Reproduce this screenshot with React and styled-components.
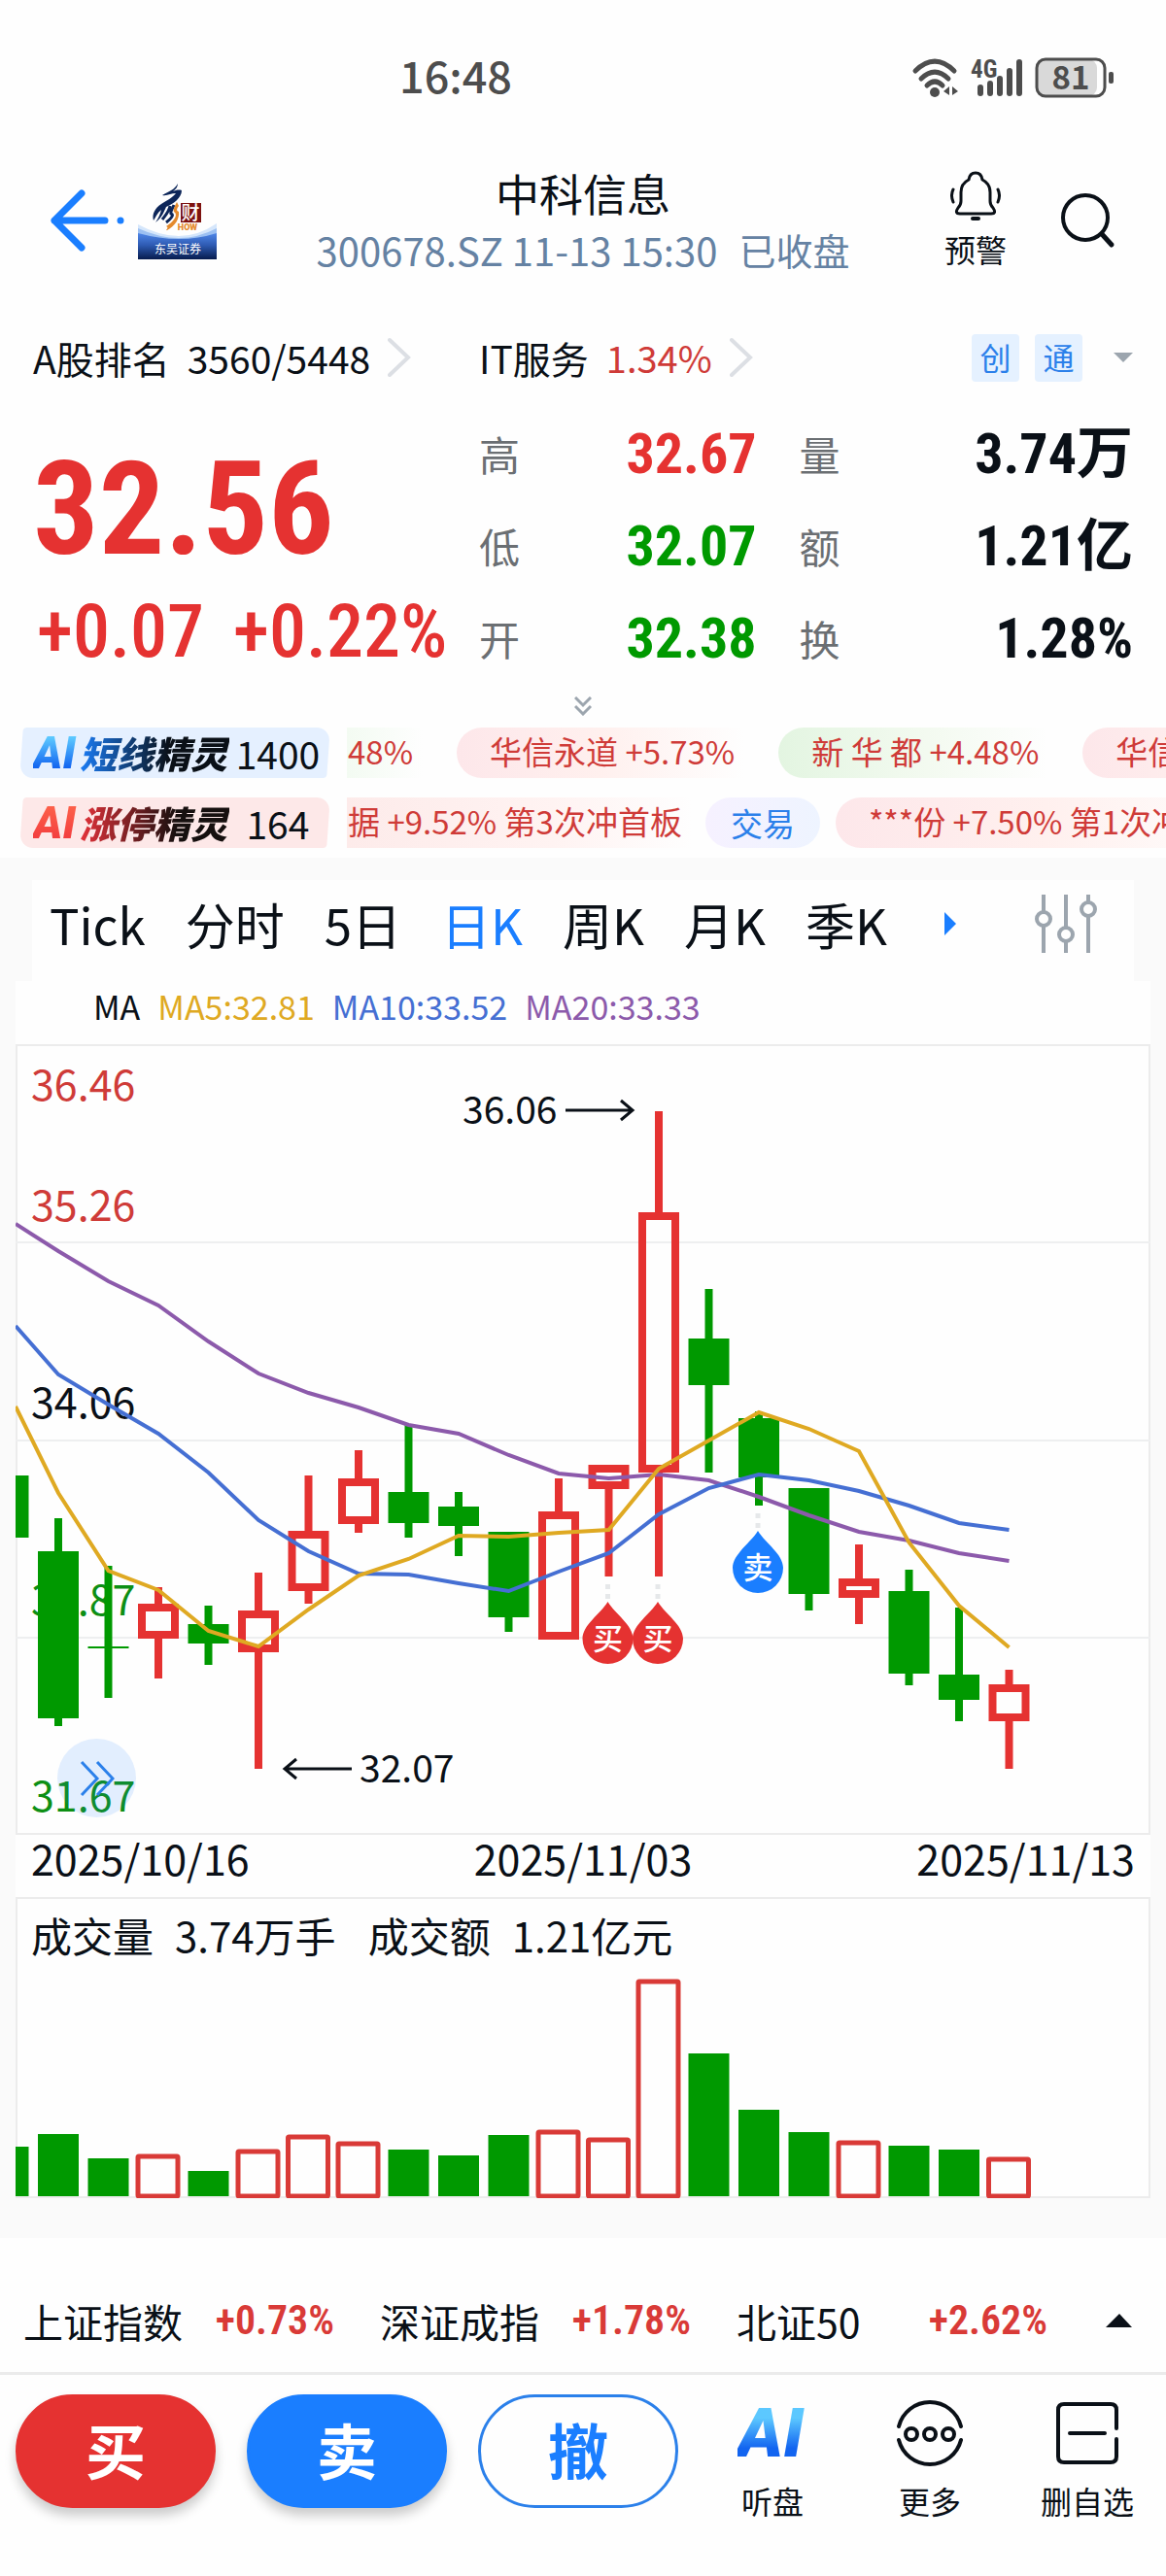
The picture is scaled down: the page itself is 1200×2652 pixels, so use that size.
import { useState } from "react";
import styled, { createGlobalStyle, css } from "styled-components";

const RED = "#e53231";
const GREEN = "#009900";
const BLUE = "#1a7eff";
const INK = "#0a1017";

const GlobalStyle = createGlobalStyle`
* {
  box-sizing: border-box;
}
body {
  margin: 0;
  background: #fefefe;
  color: ${INK};
  font-family: "Noto Sans CJK SC", "Noto Sans", sans-serif;
}
button {
  border: 0;
  padding: 0;
  background: none;
  color: inherit;
  font: inherit;
  cursor: pointer;
}
svg {
  display: block;
  flex: none;
}
`;

const narrow = css`
font-family: "Roboto Condensed", "Liberation Sans Narrow", "Noto Sans CJK SC", sans-serif;
`;

const Page = styled.main`
width: 100%;
overflow: hidden;
`;

/* status bar */

const StatusBar = styled.div`
display: flex;
justify-content: space-between;
align-items: center;
height: 154px;
padding: 0 54px 0 34%;
color: #4d4d4d;
`;

const Clock = styled.time`
font-size: 45px;
font-weight: 500;
line-height: 48px;
padding-left: 3px;
`;

const StatusIcons = styled.div`
display: flex;
align-items: center;
gap: 12px;
padding-top: 6px;
svg {
  overflow: visible;
}
`;

/* header */

const Header = styled.header`
display: grid;
grid-template-columns: 1fr auto 1fr;
align-items: center;
padding: 15px 52px 0 52px;
`;

const HeaderLeft = styled.div`
display: flex;
align-items: center;
gap: 14px;
`;

const HeaderRight = styled.div`
display: flex;
align-items: center;
justify-content: flex-end;
gap: 56px;
`;

const TitleBlock = styled.div`
text-align: center;
`;

const Title = styled.h1`
margin: 0;
font-size: 45px;
font-weight: 400;
line-height: 60px;
`;

const SubTitle = styled.p`
display: flex;
gap: 22px;
margin: 0;
color: #6582a3;
font-size: 40px;
line-height: 56px;
white-space: nowrap;
`;

const MarketState = styled.span`
font-size: 38px;
`;

const IconButton = styled.button`
display: flex;
flex-direction: column;
align-items: center;
gap: 6px;
font-size: 32px;
line-height: 44px;
white-space: nowrap;
`;

/* rank and quote */

const RankRow = styled.div`
display: grid;
grid-template-columns: 459fr 673fr;
align-items: center;
height: 60px;
margin-top: 53px;
padding: 0 34px;
font-size: 39px;
line-height: 58px;
`;

const RankLink = styled.a`
display: flex;
align-items: center;
gap: 18px;
color: inherit;
text-decoration: none;
white-space: nowrap;
`;

const RankRight = styled.div`
display: flex;
align-items: center;
justify-content: space-between;
`;

const Up = styled.span`
color: #cf3b38;
font-size: 38px;
`;

const Tags = styled.div`
display: flex;
align-items: center;
gap: 16px;
`;

const Tag = styled.span`
width: 49px;
height: 49px;
border-radius: 4px;
background: #e5f1ff;
color: #2b80ea;
font-size: 32px;
line-height: 46px;
text-align: center;
`;

const TagArrow = styled.button`
margin-left: 16px;
`;

const Quote = styled.section`
display: grid;
grid-template-columns: 459fr 673fr;
height: 285px;
margin-top: 21px;
padding: 0 34px;
`;

const PriceBlock = styled.div`
${narrow}
color: ${RED};
font-weight: 700;
white-space: nowrap;
`;

const Price = styled.div`
margin-top: 36px;
font-size: 134px;
line-height: 140px;
`;

const Change = styled.div`
display: flex;
gap: 30px;
margin-top: 10px;
padding-left: 4px;
font-size: 76px;
line-height: 90px;
font-weight: 500;
`;

const Stats = styled.dl`
display: grid;
grid-template-columns: 286fr 344fr;
grid-auto-rows: 95px;
column-gap: 44px;
margin: 0;
`;

const Stat = styled.div`
display: flex;
align-items: center;
justify-content: space-between;
white-space: nowrap;
`;

const StatLabel = styled.dt`
color: #6b6f73;
font-size: 42px;
line-height: 60px;
`;

const StatValue = styled.dd`
${narrow}
margin: 0;
color: ${(props) => props.$color || INK};
font-size: 58px;
font-weight: 700;
line-height: 60px;
`;

const ExpandButton = styled.button`
display: flex;
align-items: center;
justify-content: center;
width: 100%;
height: 45px;
`;

/* AI tickers */

const Tickers = styled.section`
display: flex;
flex-direction: column;
gap: 20px;
padding: 0 0 10px 20px;
`;

const TickerRow = styled.div`
display: flex;
gap: 17px;
height: 52px;
`;

const TickerName = styled.button`
display: flex;
flex: none;
align-items: center;
width: 320px;
padding-left: 14px;
position: relative;
z-index: 0;
&::before {
  content: "";
  position: absolute;
  inset: 0 2px;
  z-index: -1;
  border-radius: 4px 14px 4px 14px;
  background: ${(props) => (props.$hot ? "#fde8e8" : "#e5f0ff")};
  transform: skewX(-4deg);
}
`;

const AiMark = styled.span`
flex: none;
padding-right: 4px;
font-family: Roboto, "Liberation Sans", sans-serif;
font-size: ${(props) => props.$size}px;
font-style: italic;
font-weight: 900;
line-height: 52px;
background: ${(props) => (props.$hot ? "linear-gradient(#ff6a4d, #f0343c)" : "linear-gradient(#5cc8ff 20%, #1264f0 80%)")};
background-clip: text;
-webkit-background-clip: text;
color: transparent;
`;

const AiName = styled.span`
flex: none;
padding-right: 2px;
font-size: 38px;
font-style: italic;
font-weight: 900;
line-height: 50px;
background: ${(props) => (props.$hot ? "linear-gradient(to right, #e5323a, #16100f 65%)" : "linear-gradient(to right, #1a7cf5, #0a1017 60%)")};
background-clip: text;
-webkit-background-clip: text;
color: transparent;
`;

const AiCount = styled.span`
flex: 1;
padding-right: 4px;
font-size: 39px;
line-height: 50px;
text-align: center;
`;

const TickerTrack = styled.div`
display: flex;
flex: 1;
min-width: 0;
overflow: hidden;
color: #cf3b38;
font-size: 33px;
line-height: 48px;
white-space: nowrap;
`;

const tints = {
  red: "#fde7ea, #fff0ee 50%, #fefefe",
  redTail: "#fdebea, #fff3f2 60%, #fefefe",
  green: "#e3f5e1, #f3faf0 55%, #fefefe",
  greenTail: "#f3fbf2, #fefefe",
};

const TickerPill = styled.span`
flex: none;
height: 52px;
margin-right: ${(props) => (props.$long ? "14px" : "35px")};
padding: 0 10px 0 ${(props) => (props.$cut ? "1px" : "34px")};
border-radius: ${(props) => (props.$cut ? "0" : "26px 0 0 26px")};
background: linear-gradient(to right, ${(props) => tints[props.$tint]});
`;

const TradeButton = styled.button`
flex: none;
width: 118px;
height: 52px;
margin-right: 16px;
border-radius: 26px;
background: linear-gradient(to right, #f6f1ff, #eef4ff);
color: #2b80ea;
`;

/* chart */

const ChartSection = styled.section`
padding: 23px 16px 41px;
background: #fafafa;
`;

const Tabs = styled.nav`
display: flex;
align-items: center;
justify-content: space-between;
height: 104px;
margin: 0 17px;
padding: 0 38px 14px 18px;
background: #fefefe;
`;

const TabList = styled.div`
display: flex;
align-items: center;
gap: 41px;
`;

const Tab = styled.button`
color: ${(props) => (props.$active ? BLUE : INK)};
font-size: 51px;
line-height: 72px;
white-space: nowrap;
`;

const MoreTabs = styled.button`
padding-left: 18px;
`;

const Panel = styled.div`
background: #fefefe;
`;

const MaRow = styled.div`
display: flex;
gap: 18px;
height: 65px;
padding-left: 80px;
font-size: 34px;
line-height: 52px;
`;

const Ma = styled.span`
color: ${(props) => props.$color};
`;

const ChartBox = styled.div`
position: relative;
svg {
  width: 100%;
  height: auto;
}
`;

const BackButton = styled.button`
position: absolute;
left: 43px;
bottom: 18px;
display: flex;
align-items: center;
justify-content: center;
width: 81px;
height: 81px;
border-radius: 50%;
background: rgba(26, 126, 255, 0.12);
&& svg {
  width: 36px;
  height: 38px;
}
`;

const Dates = styled.div`
display: flex;
justify-content: space-between;
height: 64px;
padding: 0 16px;
font-size: 43px;
line-height: 46px;
`;

const VolumeTitle = styled.dl`
display: flex;
gap: 33px;
height: 78px;
margin: 0;
padding: 0 14px;
border: 2px solid #ececec;
border-bottom: 0;
font-size: 42px;
line-height: 74px;
`;

const VolumeItem = styled.div`
display: flex;
gap: 22px;
dd {
  margin: 0;
}
`;

/* bottom */

const IndexBar = styled.section`
display: flex;
align-items: center;
height: 138px;
padding: 32px 35px 0 24px;
font-size: 41px;
line-height: 60px;
`;

const IndexList = styled.div`
display: grid;
flex: 1;
grid-template-columns: repeat(3, 1fr);
column-gap: 47px;
margin-right: 60px;
`;

const IndexItem = styled.a`
display: flex;
justify-content: space-between;
color: inherit;
text-decoration: none;
white-space: nowrap;
`;

const IndexChange = styled.span`
${narrow}
color: #d93a37;
font-size: 42px;
font-weight: 600;
`;

const ActionBar = styled.footer`
display: grid;
grid-template-columns: repeat(3, 206fr) 130fr 130fr 130fr;
column-gap: 32px;
align-items: start;
height: 209px;
padding: 20px 16px 0;
border-top: 3px solid #ebebeb;
`;

const TradeAction = styled.button`
height: 117px;
border: 3px solid ${(props) => props.$line};
border-radius: 59px;
background: ${(props) => props.$fill};
box-shadow: ${(props) => (props.$shadow ? "0 8px 12px rgba(0, 0, 0, 0.2)" : "none")};
color: ${(props) => props.$text};
font-size: 62px;
font-weight: 700;
line-height: 104px;
padding-bottom: 5px;
`;

const Tool = styled.button`
display: grid;
grid-template-rows: 80px 44px;
justify-items: center;
align-items: center;
row-gap: 7px;
font-size: 32px;
line-height: 44px;
white-space: nowrap;
`;

const X0 = 44;
const STEP = 51.5;
const centre = (i) => X0 + STEP * i;

// high, body top, body bottom, low in chart units; u marks a rising day
const candles = [
  { i: -1, h: 444, t: 444, b: 508, l: 508, v: 179 },
  { i: 0, h: 488, t: 522, b: 694, l: 702, v: 166 },
  { i: 1, h: 537, t: 620, b: 622, l: 673, v: 191 },
  { i: 2, h: 559, t: 576, b: 612, l: 653, v: 187, u: true },
  { i: 3, h: 578, t: 597, b: 617, l: 639, v: 204 },
  { i: 4, h: 544, t: 583, b: 626, l: 746, v: 182, u: true },
  { i: 5, h: 444, t: 501, b: 563, l: 576, v: 167, u: true },
  { i: 6, h: 418, t: 447, b: 494, l: 503, v: 174, u: true },
  { i: 7, h: 392, t: 461, b: 493, l: 508, v: 182 },
  { i: 8, h: 461, t: 476, b: 496, l: 527, v: 188 },
  { i: 9, h: 502, t: 502, b: 590, l: 605, v: 167 },
  { i: 10, h: 447, t: 481, b: 613, l: 613, v: 162, u: true },
  { i: 11, h: 433, t: 433, b: 458, l: 548, v: 170, u: true },
  { i: 12, h: 69, t: 173, b: 441, l: 548, v: 7, u: true },
  { i: 13, h: 252, t: 303, b: 351, l: 441, v: 83 },
  { i: 14, h: 378, t: 385, b: 446, l: 475, v: 141 },
  { i: 15, h: 457, t: 457, b: 566, l: 583, v: 164 },
  { i: 16, h: 515, t: 550, b: 570, l: 597, v: 173, u: true },
  { i: 17, h: 541, t: 563, b: 648, l: 660, v: 178 },
  { i: 18, h: 580, t: 649, b: 675, l: 697, v: 182 },
  { i: 19, h: 644, t: 659, b: 697, l: 746, v: 190, u: true },
];

const averages = [
  {
    name: "MA20",
    value: "33.33",
    color: "#8c5aab",
    start: 185,
    points: [213, 244, 269, 306, 339, 359, 374, 392, 401, 423, 442, 447, 443, 449, 466, 485, 502, 511, 524, 532],
  },
  {
    name: "MA10",
    value: "33.52",
    color: "#456fd3",
    start: 290,
    points: [340, 371, 401, 441, 490, 522, 545, 546, 555, 563, 543, 524, 484, 457, 443, 449, 460, 475, 493, 500],
  },
  {
    name: "MA5",
    value: "32.81",
    color: "#dfa922",
    start: 373,
    points: [462, 542, 562, 604, 620, 582, 547, 530, 506, 507, 503, 500, 437, 408, 379, 396, 419, 513, 578, 621],
  },
];

const priceLabels = [
  { text: "36.46", y: 58, color: "#cf3b38" },
  { text: "35.26", y: 182, color: "#cf3b38" },
  { text: "34.06", y: 385, color: INK },
  { text: "32.87", y: 588, color: "#0d8f14" },
  { text: "31.67", y: 790, color: "#0d8f14" },
];

const trades = [
  { i: 11, tip: 574, text: "买", color: RED },
  { i: 12, tip: 574, text: "买", color: RED },
  { i: 14, tip: 501, text: "卖", color: BLUE },
];

const indexes = [
  { name: "上证指数", change: "+0.73%" },
  { name: "深证成指", change: "+1.78%" },
  { name: "北证50", change: "+2.62%" },
];

const periods = ["Tick", "分时", "5日", "日K", "周K", "月K", "季K"];

function Candle({ h, t, b, l, i, u }) {
  const x = centre(i);
  if (u) {
    return (
      <g>
        <path d={`M${x} ${h}V${t + 1}M${x} ${b - 1}V${l}`} stroke={RED} strokeWidth="8" />
        <rect x={x - 17} y={t + 4} width="34" height={b - t - 8} fill="none" stroke={RED} strokeWidth="8" />
      </g>
    );
  }
  return (
    <g fill={GREEN}>
      <rect x={x - 4} y={h} width="8" height={l - h} />
      <rect x={x - 21} y={t} width="42" height={b - t} />
    </g>
  );
}

function TradePin({ i, tip, text, color }) {
  const x = centre(i) - 1;
  return (
    <g>
      <path d={`M${x} ${tip - 18}v5m0 5v5`} stroke="#e6e8ea" strokeWidth="5" />
      <path
        d={`M${x} ${tip}C${x + 8} ${tip + 13} ${x + 26} ${tip + 24} ${x + 26} ${tip + 38}A26 26 0 0 1 ${x - 26} ${tip + 38}C${x - 26} ${tip + 24} ${x - 8} ${tip + 13} ${x} ${tip}Z`}
        fill={color}
      />
      <text x={x} y={tip + 49} fill="#fff" fontSize="31" fontWeight="500" textAnchor="middle">{text}</text>
    </g>
  );
}

function PriceChart() {
  return (
    <svg viewBox="0 0 1168 814" role="img" aria-label="日K">
      <rect x="1" y="1" width="1166" height="812" fill="none" stroke="#ececec" strokeWidth="2" />
      <path d="M0 204H1168M0 408H1168M0 611H1168" stroke="#eeeff0" strokeWidth="2" />
      {priceLabels.map((label) => (
        <text key={label.text} x="16" y={label.y} fill={label.color} fontSize="43">{label.text}</text>
      ))}
      {candles.map((candle) => (
        <Candle key={candle.i} {...candle} />
      ))}
      {averages.map((line) => (
        <polyline
          key={line.name}
          points={[`0,${line.start}`, ...line.points.map((y, i) => `${centre(i)},${y}`)].join(" ")}
          fill="none"
          stroke={line.color}
          strokeWidth="4"
        />
      ))}
      {trades.map((trade) => (
        <TradePin key={trade.i} {...trade} />
      ))}
      <g fill={INK} fontSize="39">
        <text x="460" y="82">36.06</text>
        <text x="354" y="760">32.07</text>
      </g>
      <path d="M566 68H635M623 58L635 68L623 78M346 746H277M289 736L277 746L289 756" fill="none" stroke={INK} strokeWidth="3" />
    </svg>
  );
}

function VolumeChart() {
  return (
    <svg viewBox="0 0 1168 232" role="img" aria-label="成交量">
      <path d="M1 0V231H1167V0" fill="none" stroke="#ececec" strokeWidth="2" />
      {candles.map(({ i, v, u }) =>
        u ? (
          <rect key={i} x={centre(i) - 21} y={v + 2} width="41" height={228 - v} rx="1" fill="#fefefe" stroke="#d93a37" strokeWidth="5" />
        ) : (
          <rect key={i} x={centre(i) - 21} y={v} width="42" height={230 - v} fill={GREEN} />
        )
      )}
    </svg>
  );
}

function BrokerLogo() {
  return (
    <svg width="81" height="80" viewBox="0 0 81 80">
      <defs>
        <linearGradient id="band" x1="0" y1="0" x2="0" y2="1">
          <stop offset="0" stopColor="#4f86e8" />
          <stop offset="0.45" stopColor="#2f5cb4" />
          <stop offset="1" stopColor="#071c4e" />
        </linearGradient>
      </defs>
      <path d="M0 44Q22 56 42 56Q62 56 81 43V60H0Z" fill="#d5e6fb" />
      <path d="M0 48Q22 58 42 58Q62 58 81 48V62H0Z" fill="#9cc0f2" />
      <path d="M0 53Q22 59 42 59Q62 59 81 53V80H0Z" fill="url(#band)" />
      <path d="M41 2C38 8 32 10 25 14C30 15 34 12 39 12C36 16 29 20 24 23C18 27 14 33 16 40C18 37 20 32 24 29C23 33 21 38 18 42C25 37 27 30 29 26C36 23 45 17 45 9C42 8 38 9 36 10C39 8 41 5 41 2Z" fill="#0d2659" />
      <path d="M33 25C32 31 28 35 25 39M37 24C35 29 33 31 34 33C38 34 33 39 29 42" fill="none" stroke="#0d2659" strokeWidth="3" />
      <path d="M40 21C37 27 36 29 37 31C42 34 37 41 29 46C33 47 27 51 30 50C38 46 43 38 42 31C40 30 39 29 42 25Z" fill="#e48a2c" />
      <rect x="44" y="22" width="21" height="20" fill="#7d1210" />
      <text x="54" y="39" fill="#fff" fontSize="19" fontWeight="500" textAnchor="middle">财</text>
      <text x="51" y="50" fill="#e48a2c" fontFamily="Roboto, sans-serif" fontSize="9" fontWeight="900" textAnchor="middle">HOW</text>
      <text x="41" y="74" fill="#fff" fontSize="12" textAnchor="middle">东吴证券</text>
    </svg>
  );
}

function Chevron() {
  return (
    <svg width="24" height="42" viewBox="0 0 24 42" fill="none" stroke="#dcdfe4" strokeWidth="4" strokeLinecap="round">
      <path d="M2 3L21 21L2 39" />
    </svg>
  );
}

function App() {
  const [period, setPeriod] = useState("日K");

  return (
    <Page>
      <GlobalStyle />

      <StatusBar>
        <Clock>16:48</Clock>
        <StatusIcons>
          <svg width="48" height="40" viewBox="0 0 48 40" fill="none" stroke="#4d4d4d" strokeWidth="5" strokeLinecap="round">
            <path d="M4 13Q24 -7 44 13M10 21Q24 7 38 21M16 28Q24 20 32 28" />
            <circle cx="24" cy="35" r="5" fill="#4d4d4d" stroke="none" />
            <path d="M39 29V38L33 34ZM42 29L48 34L42 38Z" fill="#4d4d4d" stroke="none" />
          </svg>
          <svg width="56" height="40" viewBox="0 0 56 40">
            <text x="1" y="20" fill="#4d4d4d" fontFamily="Roboto Condensed, Liberation Sans Narrow, sans-serif" fontSize="25" fontWeight="700">4G</text>
            <path d="M11 30V36M21 26V36M31 21V36M41 13V36M51 4V36" stroke="#4d4d4d" strokeWidth="6" strokeLinecap="round" />
          </svg>
          <svg width="80" height="42" viewBox="0 0 80 42">
            <rect x="1" y="2" width="62" height="38" rx="9" fill="#d9d9d9" />
            <rect x="1" y="2" width="70" height="38" rx="9" fill="none" stroke="#4d4d4d" strokeWidth="3" />
            <rect x="75" y="15" width="5" height="12" rx="2" fill="#4d4d4d" />
            <text x="36" y="33" fill="#4d4d4d" fontSize="33" fontWeight="700" textAnchor="middle">81</text>
          </svg>
        </StatusIcons>
      </StatusBar>

      <Header>
        <HeaderLeft>
          <button aria-label="返回">
            <svg width="76" height="64" viewBox="0 0 76 64" fill="none" stroke={BLUE} strokeWidth="7" strokeLinecap="round" strokeLinejoin="round">
              <path d="M32 4L4 32L32 60M4 32H56" />
              <path d="M72 32H72" />
            </svg>
          </button>
          <BrokerLogo />
        </HeaderLeft>
        <TitleBlock>
          <Title>中科信息</Title>
          <SubTitle>
            <span>300678.SZ 11-13 15:30</span>
            <MarketState>已收盘</MarketState>
          </SubTitle>
        </TitleBlock>
        <HeaderRight>
          <IconButton>
            <svg width="52" height="52" viewBox="0 0 52 52" fill="none" stroke={INK} strokeWidth="3" strokeLinecap="round" strokeLinejoin="round">
              <path d="M19 9Q20 2 26 2Q32 2 33 9Q41 13 41 22V31Q41 35 44 38Q48 44 42 44H10Q4 44 8 38Q11 35 11 31V22Q11 13 19 9Z" />
              <path d="M23 49H29" strokeWidth="4" />
              <path d="M3 19Q0 25 3 32M49 19Q52 25 49 32" />
            </svg>
            预警
          </IconButton>
          <button aria-label="搜索">
            <svg width="56" height="58" viewBox="0 0 56 58" fill="none" stroke={INK} strokeWidth="4" strokeLinecap="round">
              <circle cx="25" cy="26" r="23" />
              <path d="M42 43L52 54" strokeWidth="5" />
            </svg>
          </button>
        </HeaderRight>
      </Header>

      <RankRow>
        <RankLink href="#rank">
          <span>A股排名</span>
          <span>3560/5448</span>
          <Chevron />
        </RankLink>
        <RankRight>
          <RankLink href="#sector">
            <span>IT服务</span>
            <Up>1.34%</Up>
            <Chevron />
          </RankLink>
          <Tags>
            <Tag>创</Tag>
            <Tag>通</Tag>
            <TagArrow aria-label="展开标签">
              <svg width="20" height="10" viewBox="0 0 20 10"><path d="M0 0H20L10 10Z" fill="#9ca5ae" /></svg>
            </TagArrow>
          </Tags>
        </RankRight>
      </RankRow>

      <Quote>
        <PriceBlock>
          <Price>32.56</Price>
          <Change>
            <span>+0.07</span>
            <span>+0.22%</span>
          </Change>
        </PriceBlock>
        <Stats>
          <Stat><StatLabel>高</StatLabel><StatValue $color={RED}>32.67</StatValue></Stat>
          <Stat><StatLabel>量</StatLabel><StatValue>3.74万</StatValue></Stat>
          <Stat><StatLabel>低</StatLabel><StatValue $color={GREEN}>32.07</StatValue></Stat>
          <Stat><StatLabel>额</StatLabel><StatValue>1.21亿</StatValue></Stat>
          <Stat><StatLabel>开</StatLabel><StatValue $color={GREEN}>32.38</StatValue></Stat>
          <Stat><StatLabel>换</StatLabel><StatValue>1.28%</StatValue></Stat>
        </Stats>
      </Quote>

      <ExpandButton aria-label="展开行情">
        <svg width="18" height="20" viewBox="0 0 18 20" fill="none" stroke="#9ca5ae" strokeWidth="3">
          <path d="M1 1L9 9L17 1M1 10L9 18L17 10" />
        </svg>
      </ExpandButton>

      <Tickers>
        <TickerRow>
          <TickerName>
            <AiMark $size={46}>AI</AiMark>
            <AiName>短线精灵</AiName>
            <AiCount>1400</AiCount>
          </TickerName>
          <TickerTrack>
            <TickerPill $tint="greenTail" $cut>48%</TickerPill>
            <TickerPill $tint="red">华信永道 +5.73%</TickerPill>
            <TickerPill $tint="green">新 华 都 +4.48%</TickerPill>
            <TickerPill $tint="red">华信永道 +5.73%</TickerPill>
          </TickerTrack>
        </TickerRow>
        <TickerRow>
          <TickerName $hot>
            <AiMark $size={46} $hot>AI</AiMark>
            <AiName $hot>涨停精灵</AiName>
            <AiCount>164</AiCount>
          </TickerName>
          <TickerTrack>
            <TickerPill $tint="redTail" $cut $long>据 +9.52% 第3次冲首板</TickerPill>
            <TradeButton>交易</TradeButton>
            <TickerPill $tint="red" $long>***份 +7.50% 第1次冲首板</TickerPill>
          </TickerTrack>
        </TickerRow>
      </Tickers>

      <ChartSection>
        <Tabs>
          <TabList>
            {periods.map((name) => (
              <Tab key={name} $active={name === period} onClick={() => setPeriod(name)}>{name}</Tab>
            ))}
            <MoreTabs aria-label="更多周期">
              <svg width="12" height="24" viewBox="0 0 12 24"><path d="M0 0L12 12L0 24Z" fill={BLUE} /></svg>
            </MoreTabs>
          </TabList>
          <button aria-label="指标设置">
            <svg width="64" height="60" viewBox="0 0 64 60" fill="none" stroke="#9ca5ae" strokeWidth="4">
              <path d="M9 0V18M9 33V60M32 0V34M32 49V60M55 0V8M55 23V60" />
              <circle cx="9" cy="25" r="7" />
              <circle cx="32" cy="41" r="7" />
              <circle cx="55" cy="15" r="7" />
            </svg>
          </button>
        </Tabs>
        <Panel>
          <MaRow>
            <span>MA</span>
            {[...averages].reverse().map((line) => (
              <Ma key={line.name} $color={line.color}>{line.name}:{line.value}</Ma>
            ))}
          </MaRow>
          <ChartBox>
            <PriceChart />
            <BackButton aria-label="后退">
              <svg width="36" height="38" viewBox="0 0 36 38" fill="none" stroke="#2b80ea" strokeWidth="3">
                <path d="M2 2L18 19L2 36M18 2L34 19L18 36" />
              </svg>
            </BackButton>
          </ChartBox>
          <Dates>
            <time>2025/10/16</time>
            <time>2025/11/03</time>
            <time>2025/11/13</time>
          </Dates>
          <VolumeTitle>
            <VolumeItem><dt>成交量</dt><dd>3.74万手</dd></VolumeItem>
            <VolumeItem><dt>成交额</dt><dd>1.21亿元</dd></VolumeItem>
          </VolumeTitle>
          <ChartBox>
            <VolumeChart />
          </ChartBox>
        </Panel>
      </ChartSection>

      <IndexBar>
        <IndexList>
          {indexes.map((index) => (
            <IndexItem key={index.name} href="#index">
              <span>{index.name}</span>
              <IndexChange>{index.change}</IndexChange>
            </IndexItem>
          ))}
        </IndexList>
        <button aria-label="展开指数">
          <svg width="27" height="14" viewBox="0 0 27 14"><path d="M0 14L14 0L27 14Z" fill={INK} /></svg>
        </button>
      </IndexBar>

      <ActionBar>
        <TradeAction $fill={RED} $line={RED} $text="#fff" $shadow>买</TradeAction>
        <TradeAction $fill={BLUE} $line={BLUE} $text="#fff" $shadow>卖</TradeAction>
        <TradeAction $fill="transparent" $line="#2b80ea" $text={BLUE}>撤</TradeAction>
        <Tool>
          <AiMark $size={72}>AI</AiMark>
          听盘
        </Tool>
        <Tool>
          <svg width="68" height="72" viewBox="0 0 68 72" fill="none" stroke={INK} strokeWidth="4" strokeLinecap="round">
            <path d="M2 29A33 33 0 0 1 66 29M2 43A33 33 0 0 0 66 43" />
            <circle cx="15" cy="37" r="6" />
            <circle cx="34" cy="37" r="6" />
            <circle cx="53" cy="37" r="6" />
          </svg>
          更多
        </Tool>
        <Tool>
          <svg width="64" height="64" viewBox="0 0 64 64" fill="none" stroke={INK} strokeWidth="4" strokeLinecap="round">
            <path d="M62 27V8Q62 2 56 2H8Q2 2 2 8V56Q2 62 8 62H56Q62 62 62 56V38M14 32H50" />
          </svg>
          删自选
        </Tool>
      </ActionBar>
    </Page>
  );
}

export default App;
